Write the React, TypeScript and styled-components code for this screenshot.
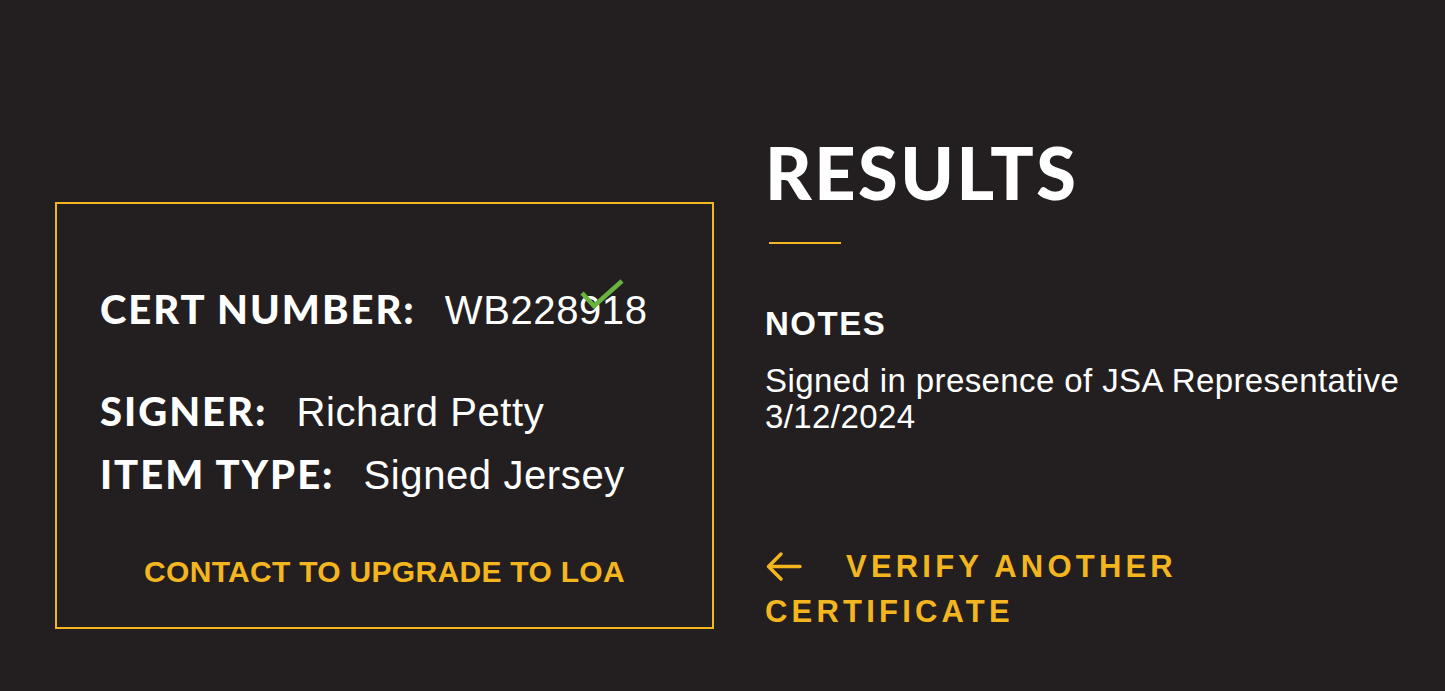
import React from "react";
import styled, { createGlobalStyle } from "styled-components";

const GlobalStyle = createGlobalStyle`
  html, body {
    margin: 0;
    padding: 0;
    background: #231f20;
  }
  body {
    font-family: "Liberation Sans", Arial, sans-serif;
    color: #ffffff;
  }
`;

const YELLOW = "#f3b61f";

const Page = styled.main`
  display: flex;
  align-items: flex-start;
  gap: 51px;
  padding: 0 0 0 55px;
  min-height: 691px;
  box-sizing: border-box;
`;

const Card = styled.section`
  width: 659px;
  box-sizing: border-box;
  margin-top: 202px;
  border: 2px solid ${YELLOW};
  padding: 81px 0 40px 43px;
  display: flex;
  flex-direction: column;
`;

const Row = styled.div<{ $gap: number }>`
  display: flex;
  align-items: baseline;
  gap: 29px;
  line-height: 48px;
  margin-top: ${(p) => p.$gap}px;
`;

const Label = styled.span`
  font-family: Lato, "Liberation Sans", sans-serif;
  font-weight: 900;
  font-size: 40px;
  letter-spacing: 2px;
  color: #ffffff;
`;

const Value = styled.span`
  font-family: "Liberation Sans", Arial, sans-serif;
  font-weight: 400;
  font-size: 40px;
  letter-spacing: 0.6px;
  color: #ffffff;
  position: relative;
`;

const Check = styled.svg`
  position: absolute;
  left: 135px;
  top: -7px;
  width: 44px;
  height: 30px;
`;

const Upgrade = styled.a`
  margin: 58px 43px 0 0;
  align-self: center;
  font-family: "Liberation Sans", Arial, sans-serif;
  font-weight: 700;
  font-size: 30px;
  line-height: 1;
  letter-spacing: 0.3px;
  color: ${YELLOW};
  text-decoration: none;
`;

const Results = styled.section`
  display: flex;
  flex-direction: column;
  align-items: flex-start;
  padding-top: 136px;
`;

const Title = styled.h1`
  margin: 0;
  font-family: Lato, "Liberation Sans", sans-serif;
  font-weight: 900;
  font-size: 72px;
  line-height: 1;
  letter-spacing: 2.5px;
  color: #ffffff;
`;

const Rule = styled.div`
  width: 72px;
  height: 2px;
  background: ${YELLOW};
  margin: 34px 0 0 4px;
`;

const NotesTitle = styled.h2`
  margin: 63px 0 0 0;
  font-family: "Liberation Sans", Arial, sans-serif;
  font-weight: 700;
  font-size: 33px;
  line-height: 1;
  letter-spacing: 1.5px;
  color: #ffffff;
`;

const NotesText = styled.p`
  margin: 23px 0 0 0;
  font-family: "Liberation Sans", Arial, sans-serif;
  font-size: 33px;
  line-height: 36px;
  letter-spacing: 0.4px;
  color: #ffffff;
  max-width: 660px;
`;

const Back = styled.a`
  margin-top: 109px;
  max-width: 450px;
  font-family: "Liberation Sans", Arial, sans-serif;
  font-weight: 700;
  font-size: 31px;
  line-height: 45px;
  letter-spacing: 4.2px;
  color: ${YELLOW};
  text-decoration: none;
`;

const Arrow = styled.svg`
  width: 37px;
  height: 31px;
  vertical-align: -5px;
  margin-right: 44px;
`;

export default function App() {
  return (
    <>
      <GlobalStyle />
      <Page>
        <Card>
          <Row $gap={0}>
            <Label>CERT NUMBER:</Label>
            <Value>
              WB228918
              <Check viewBox="0 0 44 30" aria-hidden="true">
                <path
                  d="M2 14 L14 27 L42 2"
                  fill="none"
                  stroke="#6ab23e"
                  strokeWidth="4.5"
                />
              </Check>
            </Value>
          </Row>
          <Row $gap={53}>
            <Label>SIGNER:</Label>
            <Value>Richard Petty</Value>
          </Row>
          <Row $gap={14}>
            <Label>ITEM TYPE:</Label>
            <Value>Signed Jersey</Value>
          </Row>
          <Upgrade href="#">CONTACT TO UPGRADE TO LOA</Upgrade>
        </Card>
        <Results>
          <Title>RESULTS</Title>
          <Rule />
          <NotesTitle>NOTES</NotesTitle>
          <NotesText>
            Signed in presence of JSA Representative
            <br />
            3/12/2024
          </NotesText>
          <Back href="#">
            <Arrow viewBox="0 0 37 31" aria-hidden="true">
              <path
                d="M35 15.5 H4 M16 3 L3.5 15.5 L16 28"
                fill="none"
                stroke={YELLOW}
                strokeWidth="3.5"
                strokeLinecap="round"
                strokeLinejoin="round"
              />
            </Arrow>
            VERIFY ANOTHER CERTIFICATE
          </Back>
        </Results>
      </Page>
    </>
  );
}
